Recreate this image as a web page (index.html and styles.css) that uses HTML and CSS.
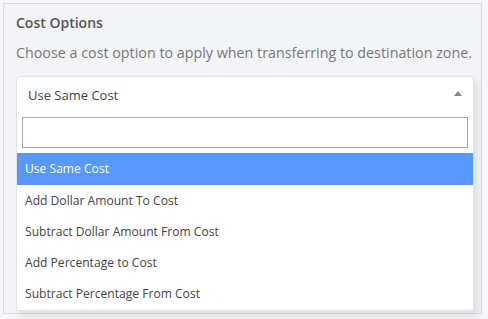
FILE: index.html
```html
<!DOCTYPE html>
<html lang="en">
  <head>
    <meta charset="UTF-8" />
    <title>Cost Options</title>
    <link rel="stylesheet" href="styles.css">
  </head>
  <body>
    <section class="panel">
      <h3 class="panel-title">Cost Options</h3>
      <p class="panel-desc">Choose a cost option to apply when transferring to destination zone.</p>

      <div class="select">
        <div class="select-current">
          <span>Use Same Cost</span>
          <span class="arrow"></span>
        </div>
        <div class="dropdown">
          <div class="search">
            <input type="text" />
          </div>
          <ul class="options">
            <li class="active">Use Same Cost</li>
            <li>Add Dollar Amount To Cost</li>
            <li>Subtract Dollar Amount From Cost</li>
            <li>Add Percentage to Cost</li>
            <li>Subtract Percentage From Cost</li>
          </ul>
        </div>
      </div>
    </section>
  </body>
</html>
```

FILE: styles.css
```css
* {
  padding: 0;
  margin: 0;
  box-sizing: border-box;
}

body {
  background: #f7f7f9;
  font-family: "Open Sans", "Liberation Sans", sans-serif;
  padding: 3px 6px 5px 3px;
}

.panel {
  height: 311px;
  border: 1px solid #dadbe0;
  background: #f2f4f7;
  padding: 9px 7px 0 12px;
}

.panel-title {
  font-size: 14px;
  font-weight: 600;
  color: #555;
  line-height: 20px;
}

.panel-desc {
  font-size: 14.3px;
  color: #777;
  margin-top: 10px;
  line-height: 20px;
  white-space: nowrap;
}

.select {
  margin-top: 13px;
  width: 458px;
  box-shadow: 4px 6px 6px rgba(0, 0, 0, 0.08);
}

.select-current {
  display: flex;
  justify-content: space-between;
  align-items: center;
  height: 36px;
  padding: 0 11px 0 11px;
  background: #fff;
  border: 1px solid #e2e3e7;
  border-bottom: none;
  border-radius: 4px 4px 0 0;
  font-size: 13px;
  color: #444;
}

.arrow {
  width: 0;
  height: 0;
  border-left: 4px solid transparent;
  border-right: 4px solid transparent;
  border-bottom: 5px solid #888;
  margin-top: -2px;
}

.dropdown {
  background: #fff;
  border: 1px solid #e2e3e7;
  border-top: none;
}

.search {
  padding: 5px 5px 5px 5px;
}

.search input {
  display: block;
  width: 100%;
  height: 31px;
  border: 1px solid #aaa;
  outline: none;
}

.options {
  list-style: none;
  padding-bottom: 1px;
}

.options li {
  font-size: 12.1px;
  color: #444;
  height: 31px;
  line-height: 31px;
  padding-left: 8px;
}

.options li.active {
  background: #5897fb;
  color: #fff;
  height: 32px;
  line-height: 32px;
}
```
